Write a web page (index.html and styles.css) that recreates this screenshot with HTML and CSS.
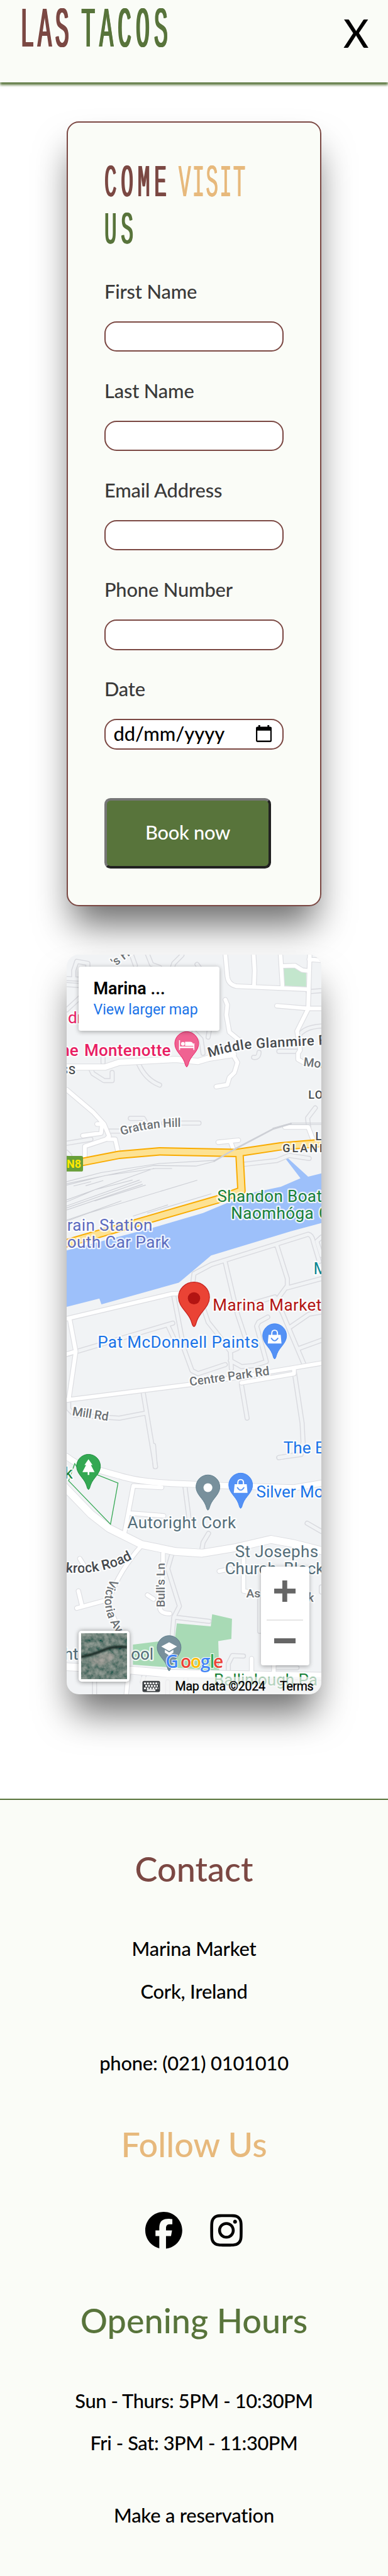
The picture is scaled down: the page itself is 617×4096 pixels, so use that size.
FILE: index.html
```html
<!DOCTYPE html>
<html lang="en">
<head>
<meta charset="utf-8">
<title>Las Tacos</title>
<link rel="stylesheet" href="styles.css">
</head>
<body>
<header class="header">
  <div class="logo"><span class="brush red">LAS</span><span class="brush green tacos">TACOS</span></div>
  <button class="close" aria-label="Close menu">X</button>
</header>
<main class="main">
  <form class="card">
    <h1 class="title">
      <span class="row"><span class="brush small red">COME</span><span class="brush small tan">VISIT</span></span>
      <span class="row"><span class="brush small green">US</span></span>
    </h1>
    <label class="label" for="first">First Name</label>
    <input class="field" id="first" type="text">
    <label class="label" for="last">Last Name</label>
    <input class="field" id="last" type="text">
    <label class="label" for="email">Email Address</label>
    <input class="field" id="email" type="email">
    <label class="label" for="phone">Phone Number</label>
    <input class="field" id="phone" type="tel">
    <span class="label">Date</span>
    <div class="field date"><span>dd/mm/yyyy</span>
      <svg class="cal" viewBox="0 0 26 28"><path fill-rule="evenodd" d="M4 0h3v2.500h12V0h3v2.500h1.500a2.500 2.500 0 0 1 2.500 2.500v20.500a2.500 2.500 0 0 1-2.500 2.500h-21A2.500 2.500 0 0 1 0 25.500V5a2.500 2.500 0 0 1 2.500-2.500H4zM2.300 9v16.500h21.400V9z"/></svg>
    </div>
    <button class="book" type="button">Book now</button>
  </form>

  <section class="map">
    <svg class="canvas" viewBox="0 0 420 1220">
      <defs>
        <path id="pin" d="M0 173C-6 173-6 164-12 148C-24 116-59 96-59 59A59 59 0 0 1 59 59C59 96 24 116 12 148C6 164 6 173 0 173Z"/>
        <g id="bag"><path d="M-30 55H30L34 98H-34Z" fill="#fff"/><path d="M-14 58V48Q-14 32 0 32Q14 32 14 48V58" fill="none" stroke="#fff" stroke-width="6"/><path d="M-16 72Q0 96 16 72" fill="none" stroke="#5491f5" stroke-width="6"/></g>
        <g id="minor">
          <path d="M60 190L160 195M60 220L130 225M95 190V150L110 105L165 115V135M60 345L130 280M240 580V605M415 610Q450 690 520 717M180 640L190 660L245 695H285V655M375 882H440L455 910M540 905H715M270 945H330M60 1005L180 985M690 455L725 490L735 560M765 450L760 480M1110 550H1200M985 580Q1010 585 1012 555M1205 480Q1230 430 1320 425M1290 830L1252 880L1258 930M930 1110L1100 1090L1160 1065L1260 1080M380 70L400 125M460 70L480 120L520 135M585 130L590 115L630 75M705 120L720 140M60 1050L75 1065M1255 255L1320 250"/>
          <path transform="translate(0 1290)" d="M685 400L690 360L775 315L1255 165Q1275 170 1280 200L1310 300M845 305L905 560L945 680M1100 220L1152 385V420L1100 490M1152 430L1320 385M900 530L1090 475L1130 560L1180 680L1235 810M1165 625L1260 560L1320 550M1320 690L1210 730M590 470L640 730L680 840L710 855L845 810M60 760L585 605M560 615L600 700M740 540L760 600L800 650L870 745L875 830M870 745L905 730M1055 575L1010 600L1000 620L1048 795L985 815L925 820L870 790M925 910L953 1075M1187 850L1225 1100L1230 1200M1110 1270L1220 1255L1230 1190M1320 180L1298 200L1320 270M438 945L500 1315M450 1050L320 1075L100 1060L70 1030V985"/>
          <path transform="translate(0 2520)" d="M645 180L665 340M728 500L735 460L762 415M580 520L560 590L618 775L590 830L580 950M595 830L765 850M490 -20L498 85M1250 365L1320 405M860 1090V1060L880 1020L935 1022M198 1130V1212M445 1110L435 1150M650 1130V1212M560 1150V1212M1100 1080H1200M1110 40L1180 28M1320 680V705M1015 740V900"/>
        </g>
        <g id="major">
          <path d="M845 70L855 180Q860 220 900 228L1255 243M985 70L990 150L987 230M1118 70L1128 235M1263 70L1255 335M1128 128L1190 126L1225 148L1255 152M1260 95L1320 100M1100 325L1255 338H1320M1255 340L1200 450L1215 545L1205 560V590L1240 610M845 295L855 320L850 370L865 455L920 500M885 570L905 605L890 655L865 680L855 715L800 725M60 740L190 850L245 910L270 970L255 985L150 1020V1090M140 967L230 955L235 910H210M265 985H300L315 1050M810 1000L910 990M870 995L885 1035M1140 925H1255L1280 990"/>
          <path transform="translate(0 1290)" d="M60 583L580 460L625 458M75 585L105 745L70 985M60 758L105 745M60 985L700 905L920 870L1190 825L1320 803M925 900L1185 855V830"/>
          <path transform="translate(0 2520)" d="M345 420L390 180L530 188M375 315L540 328M430 475Q320 600 270 740Q280 830 340 920M537 515V580L522 790Q530 812 570 812M240 750L110 785M135 770L118 700M460 720L490 740M125 540L150 580M935 540V700L960 705M815 602L870 590M975 1035V1100M365 1110L355 1210M1085 1060V1100"/>
        </g>
        <g id="trunk">
          <path d="M60 628H250L320 605L600 590L710 600L760 585L885 565"/>
          <path transform="translate(0 2520)" d="M60 35Q130 90 230 105L320 130Q430 165 640 170L860 180L1180 190L1320 167"/>
        </g>
        <g id="wide">
          <path transform="translate(0 2520)" d="M40 175L180 320L270 390L430 470L600 505L730 513L900 485L1070 445L1180 465L1340 505M60 1075L380 1092L560 1108L1330 1122"/>
        </g>
        <path id="n8" d="M60 1112L140 1097L320 1062L520 1045L900 1053L1120 1020L1330 1003M915 1055L925 1240L800 1285L50 1502"/>
        <path id="mg" d="M765 580Q900 540 1000 535L1340 517"/>
        <path id="gh" d="M332 966Q470 922 640 924"/>
        <path id="kr" d="M55 608Q260 625 420 520"/>
        <path id="va" d="M280 640Q205 765 312 915"/>
        <filter id="sat" x="0" y="0" width="100%" height="100%"><feTurbulence type="fractalNoise" baseFrequency=".13" numOctaves="4" seed="5"/><feColorMatrix values=".4 0 0 0 -.04 .35 0 0 0 .05 .33 0 0 0 .03 0 0 0 0 1"/></filter>
        <filter id="soft"><feGaussianBlur stdDeviation="1.500"/></filter>
      </defs>
      <g transform="translate(-20 -24) scale(.33333)">
        <path fill="#c3e6cd" d="M1133 135H1195L1245 160V235L1137 225Z"/>
        <path fill="#a8dab5" d="M605 3380L773 3395L780 3335L878 3358L875 3457L810 3468L815 3615L388 3585V3485L595 3460Z"/>
        <path fill="#9dc0fa" d="M1330 1152L1255 1170L1150 1075L1142 1080L1217 1178L1120 1220L970 1252L735 1350L480 1425L50 1538V1817L222 1773L232 1802L615 1695L775 1560L1170 1440L1330 1397Z"/>
        <use href="#minor" class="minor-c"/><use href="#minor" class="minor-f"/>
        <use href="#major" class="major-c"/><use href="#trunk" class="trunk-c"/><use href="#wide" class="wide-c"/>
        <use href="#major" class="major-f"/><use href="#trunk" class="trunk-f"/><use href="#wide" class="wide-f"/>
        <use href="#n8" class="n8-c"/><use href="#n8" class="n8-f"/>
        <g class="rail">
          <path d="M60 1195L230 1150L520 1105L790 1090M60 1205L490 1115L700 1118L790 1095M60 1212L250 1165L500 1130L580 1130M60 1285L490 1130M60 1295L200 1235L385 1187M60 1315L420 1187M60 1325L430 1195M95 1216L180 1195M155 1215L240 1190M60 1335L435 1208M200 1290L450 1212M170 1350L705 1188M460 1350L775 1255M60 1385L180 1345L330 1290M390 1365L560 1310"/>
          <path stroke-width="8" d="M790 1093L890 1035L1080 935L1170 908"/><path d="M1080 930L1170 905H1320M1170 912H1320M170 1350L60 1390"/>
        </g>
        <path d="M70 2675L100 2590L110 2605L314 2686L277 2890Z" fill="none" stroke="#34a853" stroke-width="4"/>
        <rect x="50" y="1068" width="91" height="77" rx="9" fill="#689f38"/>

        <g class="poi">
          <text x="66" y="412" fill="#e91e63">dr</text>
          <text x="118" y="572" fill="#e91e63" class="mid" text-anchor="end">he</text>
          <text x="147" y="572" fill="#e91e63" class="mid" textLength="428">Montenotte</text>
          <text x="805" y="1295" fill="#188038" textLength="518">Shandon Boat</text>
          <text x="873" y="1380" fill="#188038" textLength="409">Naomhóga</text><text x="1308" y="1380" fill="#188038">C</text>
          <text x="62" y="1437" fill="#5c6bc0" textLength="422">rain Station</text>
          <text x="62" y="1521" fill="#5c6bc0" textLength="506">outh Car Park</text>
          <text x="1281" y="1652" fill="#0b8793">M</text>
          <text x="783" y="1832" fill="#b31412" textLength="538">Marina Market</text>
          <text x="213" y="2018" fill="#1a73e8" textLength="798">Pat McDonnell Paints</text>
          <text x="1133" y="2538" fill="#1a73e8">The E</text>
          <text x="90" y="2663" fill="#188038" text-anchor="end">k</text>
          <text x="998" y="2757" fill="#1a73e8">Silver Mo</text>
          <text x="360" y="2910" fill="#546e7a" textLength="538">Autoright Cork</text>
          <text x="893" y="3053" fill="#546e7a" textLength="412">St Josephs</text>
          <text x="843" y="3137" fill="#546e7a">Church, Block</text>
          <text x="118" y="3560" fill="#546e7a" text-anchor="end">ht</text>
          <text x="490" y="3560" fill="#546e7a" text-anchor="end">ool</text>
          <text x="788" y="3687" fill="#188038">Ballinlough Pa</text>
        </g>
        <g class="street">
          <text transform="translate(300 132) rotate(-38)">'s Hi</text>
          <text class="dark caps" x="107" y="663" text-anchor="end">SS</text>
          <text class="dark big"><textPath href="#mg" textLength="590">Middle Glanmire R</textPath></text>
          <text transform="translate(1230 622) rotate(7)">Mon</text>
          <text class="dark caps" x="1256" y="785">LO</text>
          <text class="dark caps" x="1291" y="990">L</text>
          <text class="dark caps" x="1128" y="1049" textLength="236">GLANM</text>
          <text><textPath href="#gh" textLength="297">Grattan Hill</textPath></text>
          <text transform="translate(671 2206) rotate(-8)" textLength="398">Centre Park Rd</text>
          <text transform="translate(86 2350) rotate(9)" textLength="180">Mill Rd</text>
          <g transform="translate(0 2520)">
            <text class="dark big"><textPath href="#kr">krock Road</textPath></text>
            <text><textPath href="#va">Victoria Av</textPath></text>
            <text transform="translate(545 781) rotate(-90)" textLength="220">Bull's Ln</text>
            <text x="948" y="733">As</text><text transform="translate(1250 750) rotate(8)">k</text>
          </g>
        </g>
        <text class="shield" x="60" y="1126">N8</text>

        <g transform="translate(654 453)"><use href="#pin" fill="#f06292" stroke="#e91e63" stroke-width="3"/><path fill="#fff" d="M-38 42H-33V73H33V58H38V90H33V81H-33V90H-38ZM-28 60a9 9 0 1 1 18 0a9 9 0 1 1-18 0M-8 50H18Q33 52 33 68V70H-8Z"/></g>
        <g transform="translate(690 1692) scale(1.300 1.270)"><use href="#pin" fill="#ea4335" stroke="#c5221f" stroke-width="3"/><circle cy="63" r="23.500" fill="#b31412"/></g>
        <g transform="translate(1089 1898)"><use href="#pin" fill="#5491f5" stroke="#4285f4" stroke-width="3"/><use href="#bag"/></g>
        <g transform="translate(168 2544)"><use href="#pin" fill="#34a853" stroke="#1e8e3e" stroke-width="3"/><path fill="#fff" d="M0 24L20 53H12L30 88H4V102H-4V88H-30L-12 53H-20Z"/></g>
        <g transform="translate(759 2646)"><use href="#pin" fill="#78909c" stroke="#607d8b" stroke-width="3"/><circle cy="63" r="22" fill="#fff"/></g>
        <g transform="translate(921 2637)"><use href="#pin" fill="#5491f5" stroke="#4285f4" stroke-width="3"/><use href="#bag"/></g>
        <g transform="translate(567 3441)"><use href="#pin" fill="#78909c" stroke="#607d8b" stroke-width="3"/><path fill="#fff" d="M0 33L39 54L0 76L-39 54ZM-21 70L0 83L21 70V84L0 98L-21 84Z"/></g>

        <rect x="425" y="3645" width="900" height="95" fill="#f5f5f5" fill-opacity=".7"/>
        <g class="google">
          <text x="549" y="3602" fill="#4285f4">G</text><text x="623" y="3602" fill="#ea4335">o</text><text x="672" y="3602" fill="#fbbc05">o</text><text x="722" y="3602" fill="#4285f4">g</text><text x="768" y="3602" fill="#34a853">l</text><text x="785" y="3602" fill="#ea4335">e</text>
        </g>
        <g transform="translate(435 3665)"><rect width="87" height="55" rx="8" fill="#3c4043"/><path stroke="#fff" stroke-width="9" stroke-dasharray="9 5" d="M8 12H80M14 25H76M8 37H80"/><path stroke="#fff" stroke-width="8" d="M22 46H64"/></g>
        <g class="legal"><text x="597" y="3713" textLength="446">Map data ©2024</text><text x="1115" y="3713" textLength="167">Terms</text></g>
      </g>
    </svg>
    <div class="info"><strong>Marina ...</strong><a>View larger map</a></div>
    <div class="thumb"><svg viewBox="0 0 76 76"><rect width="76" height="76" filter="url(#sat)"/><g filter="url(#soft)"><path d="M14 44Q30 36 50 32Q60 38 48 46Q36 56 20 52Z" fill="#c3b2ac" opacity=".45"/><path d="M0 39Q20 35 34 29Q52 20 76 23" fill="none" stroke="#10201f" stroke-width="4"/></g></svg></div>
    <div class="zoomer"><span class="plus"></span><span class="rule"></span><span class="minus"></span></div>
  </section>
</main>

<footer class="footer">
  <h2 class="red">Contact</h2>
  <div class="block"><p>Marina Market</p><p>Cork, Ireland</p><p class="apart">phone: (021) 0101010</p></div>
  <h2 class="tan">Follow Us</h2>
  <div class="social">
    <svg class="fb" viewBox="0 0 512 512"><path d="M512 256C512 114.600 397.400 0 256 0S0 114.600 0 256C0 376 82.700 476.800 194.200 504.500V334.200H141.400V256h52.800V222.300c0-87.100 39.400-127.500 125-127.500c16.200 0 44.200 3.200 55.700 6.400V172c-6-.6-16.500-1-29.600-1c-42 0-58.200 15.900-58.200 57.200V256h83.600l-14.400 78.200H287V510.100C413.800 494.800 512 386.900 512 256z"/></svg>
    <svg class="ig" viewBox="0 0 448 512"><path d="M224.100 141c-63.600 0-114.900 51.300-114.900 114.900s51.300 114.900 114.900 114.900S339 319.500 339 255.900 287.700 141 224.100 141zm0 189.600c-41.100 0-74.700-33.500-74.700-74.700s33.500-74.700 74.700-74.700 74.700 33.500 74.700 74.700-33.600 74.700-74.700 74.700zm146.400-194.300c0 14.900-12 26.800-26.800 26.800-14.900 0-26.800-12-26.800-26.800s12-26.800 26.800-26.800 26.800 12 26.800 26.800zm76.100 27.200c-1.700-35.900-9.900-67.700-36.200-93.900-26.200-26.200-58-34.400-93.900-36.200-37-2.100-147.900-2.100-184.900 0-35.800 1.700-67.600 9.900-93.900 36.100s-34.400 58-36.200 93.900c-2.100 37-2.100 147.900 0 184.900 1.700 35.900 9.900 67.700 36.200 93.900s58 34.400 93.900 36.200c37 2.100 147.900 2.100 184.900 0 35.900-1.700 67.700-9.900 93.900-36.200 26.200-26.200 34.400-58 36.200-93.900 2.100-37 2.100-147.800 0-184.800zM398.800 388c-7.800 19.600-22.900 34.700-42.600 42.600-29.500 11.700-99.500 9-132.100 9s-102.700 2.600-132.100-9c-19.600-7.800-34.700-22.900-42.600-42.600-11.700-29.500-9-99.500-9-132.100s-2.600-102.700 9-132.100c7.800-19.600 22.900-34.700 42.600-42.600 29.500-11.700 99.500-9 132.100-9s102.700-2.600 132.100 9c19.600 7.800 34.700 22.900 42.600 42.600 11.700 29.500 9 99.500 9 132.100s2.700 102.700-9 132.100z"/></svg>
  </div>
  <h2 class="green">Opening Hours</h2>
  <div class="block hours"><p>Sun - Thurs: 5PM - 10:30PM</p><p>Fri - Sat: 3PM - 11:30PM</p><p class="apart">Make a reservation</p></div>
</footer>
</body>
</html>
```
FILE: styles.css
```css
* { box-sizing: border-box; }
html { background: #fff; overflow-x: hidden; }
body {
  margin: 0;
  width: 640px;
  height: 4248px;
  zoom: 0.9642;
  font: 500 32px/38px Lato, sans-serif;
  color: #000;
}
.red { color: #7b4843; }
.green { color: #58743b; }
.tan { color: #e7b97c; }

.header {
  position: relative;
  display: flex;
  justify-content: space-between;
  align-items: flex-start;
  height: 136px;
  padding: 0 32px 0 33px;
  background: #fafcf7;
  box-shadow: 0 4px 4px #58743b;
}
.logo { display: flex; padding-top: 22px; }
.brush {
  display: block;
  width: 101px;
  height: 62px;
  font: 400 95px/62px "Liberation Mono", monospace;
  letter-spacing: 15px;
  white-space: nowrap;
  transform: scaleX(0.4);
  transform-origin: 0 50%;
  text-shadow: 2px 0 currentColor, -2px 0 currentColor, 3px 0 currentColor;
}
.tacos { letter-spacing: 18px; }
.close {
  margin: 18px 0 0;
  padding: 0;
  border: 0;
  background: none;
  font: 500 64px/74px Lato, sans-serif;
  color: #000;
}

.main {
  display: flex;
  flex-direction: column;
  gap: 80px;
  height: 2830px;
  padding: 64px 110px 0;
}
.card {
  display: flex;
  flex-direction: column;
  align-items: flex-start;
  height: 1294px;
  padding: 60px;
  border: 2.1px solid #7b4843;
  border-radius: 20px;
  background: #fafcf7;
  box-shadow: 0 40px 60px -10px rgba(0, 0, 0, 0.58);
}
.title { margin: 0 0 44px; }
.row { display: flex; height: 78px; padding-top: 18px; }
.small {
  width: 122px;
  height: 49px;
  font-size: 75px;
  line-height: 49px;
  letter-spacing: 16px;
  transform: scaleX(0.45);
  text-shadow: 2px 0 currentColor, -2px 0 currentColor;
}
.small.tan { letter-spacing: 5px; text-shadow: 1px 0 currentColor, -1px 0 currentColor; }
.label { display: block; height: 38px; margin-bottom: 30px; color: #3a3a3a; letter-spacing: -0.15px; }
.field {
  width: 296px;
  height: 50px;
  margin: 0 0 46px;
  padding: 0 18px 0 13px;
  border: 2.1px solid #7b4843;
  border-radius: 20px;
  background: #fff;
  outline: none;
}
.date { display: flex; align-items: center; justify-content: space-between; margin-bottom: 80px; }
.cal { width: 26px; height: 28px; margin-top: -2px; }
.book {
  width: 275px;
  height: 116px;
  padding: 0;
  border: 4.2px solid;
  border-color: #767676 #212121 #212121 #767676;
  border-radius: 10px;
  background: #58743b;
  color: #fff;
  font: 500 32px/38px Lato, sans-serif;
  letter-spacing: -0.3px;
}

.map {
  position: relative;
  height: 1220px;
  border-radius: 20px;
  overflow: hidden;
  background: #f1f3f5;
  box-shadow: 0 40px 60px -10px rgba(0, 0, 0, 0.58);
  font-weight: 400;
}
.canvas { display: block; width: 420px; height: 1220px; }
.canvas use, .rail { stroke-linecap: round; stroke-linejoin: round; }
.minor-c, .minor-f, .major-c, .major-f, .trunk-c, .trunk-f, .wide-c, .wide-f, .n8-c, .n8-f, .rail { fill: none; }
.minor-c { stroke: #d9dadf; stroke-width: 25px; }
.minor-f { stroke: #f1f3f5; stroke-width: 16px; }
.major-c { stroke: #dcdde1; stroke-width: 26px; }
.major-f { stroke: #fff; stroke-width: 19px; }
.trunk-c { stroke: #dcdde1; stroke-width: 34px; }
.trunk-f { stroke: #fff; stroke-width: 28px; }
.wide-c { stroke: #dcdde1; stroke-width: 42px; }
.wide-f { stroke: #fff; stroke-width: 36px; }
.n8-c { stroke: #f9ab00; stroke-width: 42px; }
.n8-f { stroke: #fde293; stroke-width: 30px; }
.rail { stroke: #cdcfd5; stroke-width: 3.5px; }
.canvas text { font-family: Roboto, sans-serif; }
.poi, .street { paint-order: stroke; stroke: rgba(255, 255, 255, 0.8); stroke-width: 14px; stroke-linejoin: round; }
.poi { font-size: 81px; }
.mid { font-weight: 500; }
.street { font-size: 60px; font-weight: 500; fill: #6b7074; }
.street .dark { fill: #45494d; }
.street .caps { font-size: 56px; letter-spacing: 4px; }
.street .big { font-size: 68px; }
.shield { font-size: 56px; font-weight: 700; fill: #ffe900; }
.canvas .google text { font: 600 88px "Open Sans", sans-serif; paint-order: stroke; stroke: #fff; stroke-width: 6px; }
.legal { font-size: 61px; fill: #000; stroke: #000; stroke-width: 1px; }

.info {
  position: absolute;
  left: 20px;
  top: 20px;
  display: flex;
  flex-direction: column;
  width: 232px;
  height: 106px;
  padding: 20px 24px;
  border-radius: 4px;
  background: #fff;
  box-shadow: 0 2px 8px rgba(0, 0, 0, 0.3);
  font: 400 24px/34px Roboto, sans-serif;
  color: #1a73e8;
  white-space: nowrap;
}
.info strong { font-size: 28px; font-weight: 600; color: #000; }
.info a { font-size: 24px; line-height: 36px; }
.thumb {
  position: absolute;
  left: 20px;
  top: 1115px;
  width: 84px;
  height: 84px;
  padding: 4px;
  border-radius: 5px;
  background: #fff;
  box-shadow: 0 1px 8px rgba(0, 0, 0, 0.4);
}
.thumb svg { display: block; width: 76px; height: 76px; }
.zoomer {
  position: absolute;
  left: 320px;
  top: 1010px;
  display: flex;
  flex-direction: column;
  align-items: center;
  justify-content: space-between;
  width: 80px;
  height: 162px;
  padding: 22px 0 36px;
  border-radius: 4px;
  background: #fff;
  box-shadow: 0 2px 8px rgba(0, 0, 0, 0.3);
}
.plus {
  width: 36px;
  height: 36px;
  background: linear-gradient(#666, #666) center / 36px 8px no-repeat, linear-gradient(#666, #666) center / 8px 36px no-repeat;
}
.rule { width: 60px; height: 2.1px; background: #e6e6e6; }
.minus { width: 36px; height: 8px; background: #666; }

.footer {
  display: flex;
  flex-direction: column;
  align-items: center;
  height: 1282px;
  padding-top: 80px;
  border-top: 2.1px solid #58743b;
  background: #fafcf7;
}
.footer h2 { margin: 0; font-size: 56px; font-weight: 500; line-height: 67px; }
.block { padding: 64px 0; text-align: center; letter-spacing: -0.2px; }
.hours { letter-spacing: -0.42px; }
.hours .apart { letter-spacing: -0.2px; }
.block p { margin: 0; line-height: 70px; }
.block .apart { margin-top: 49px; }
.social { display: flex; align-items: center; gap: 45px; height: 60px; margin: 79px 0 85px; }
.fb, .ig { display: block; height: 61px; }
.fb { width: 61px; }
.ig { width: 54px; }
```
